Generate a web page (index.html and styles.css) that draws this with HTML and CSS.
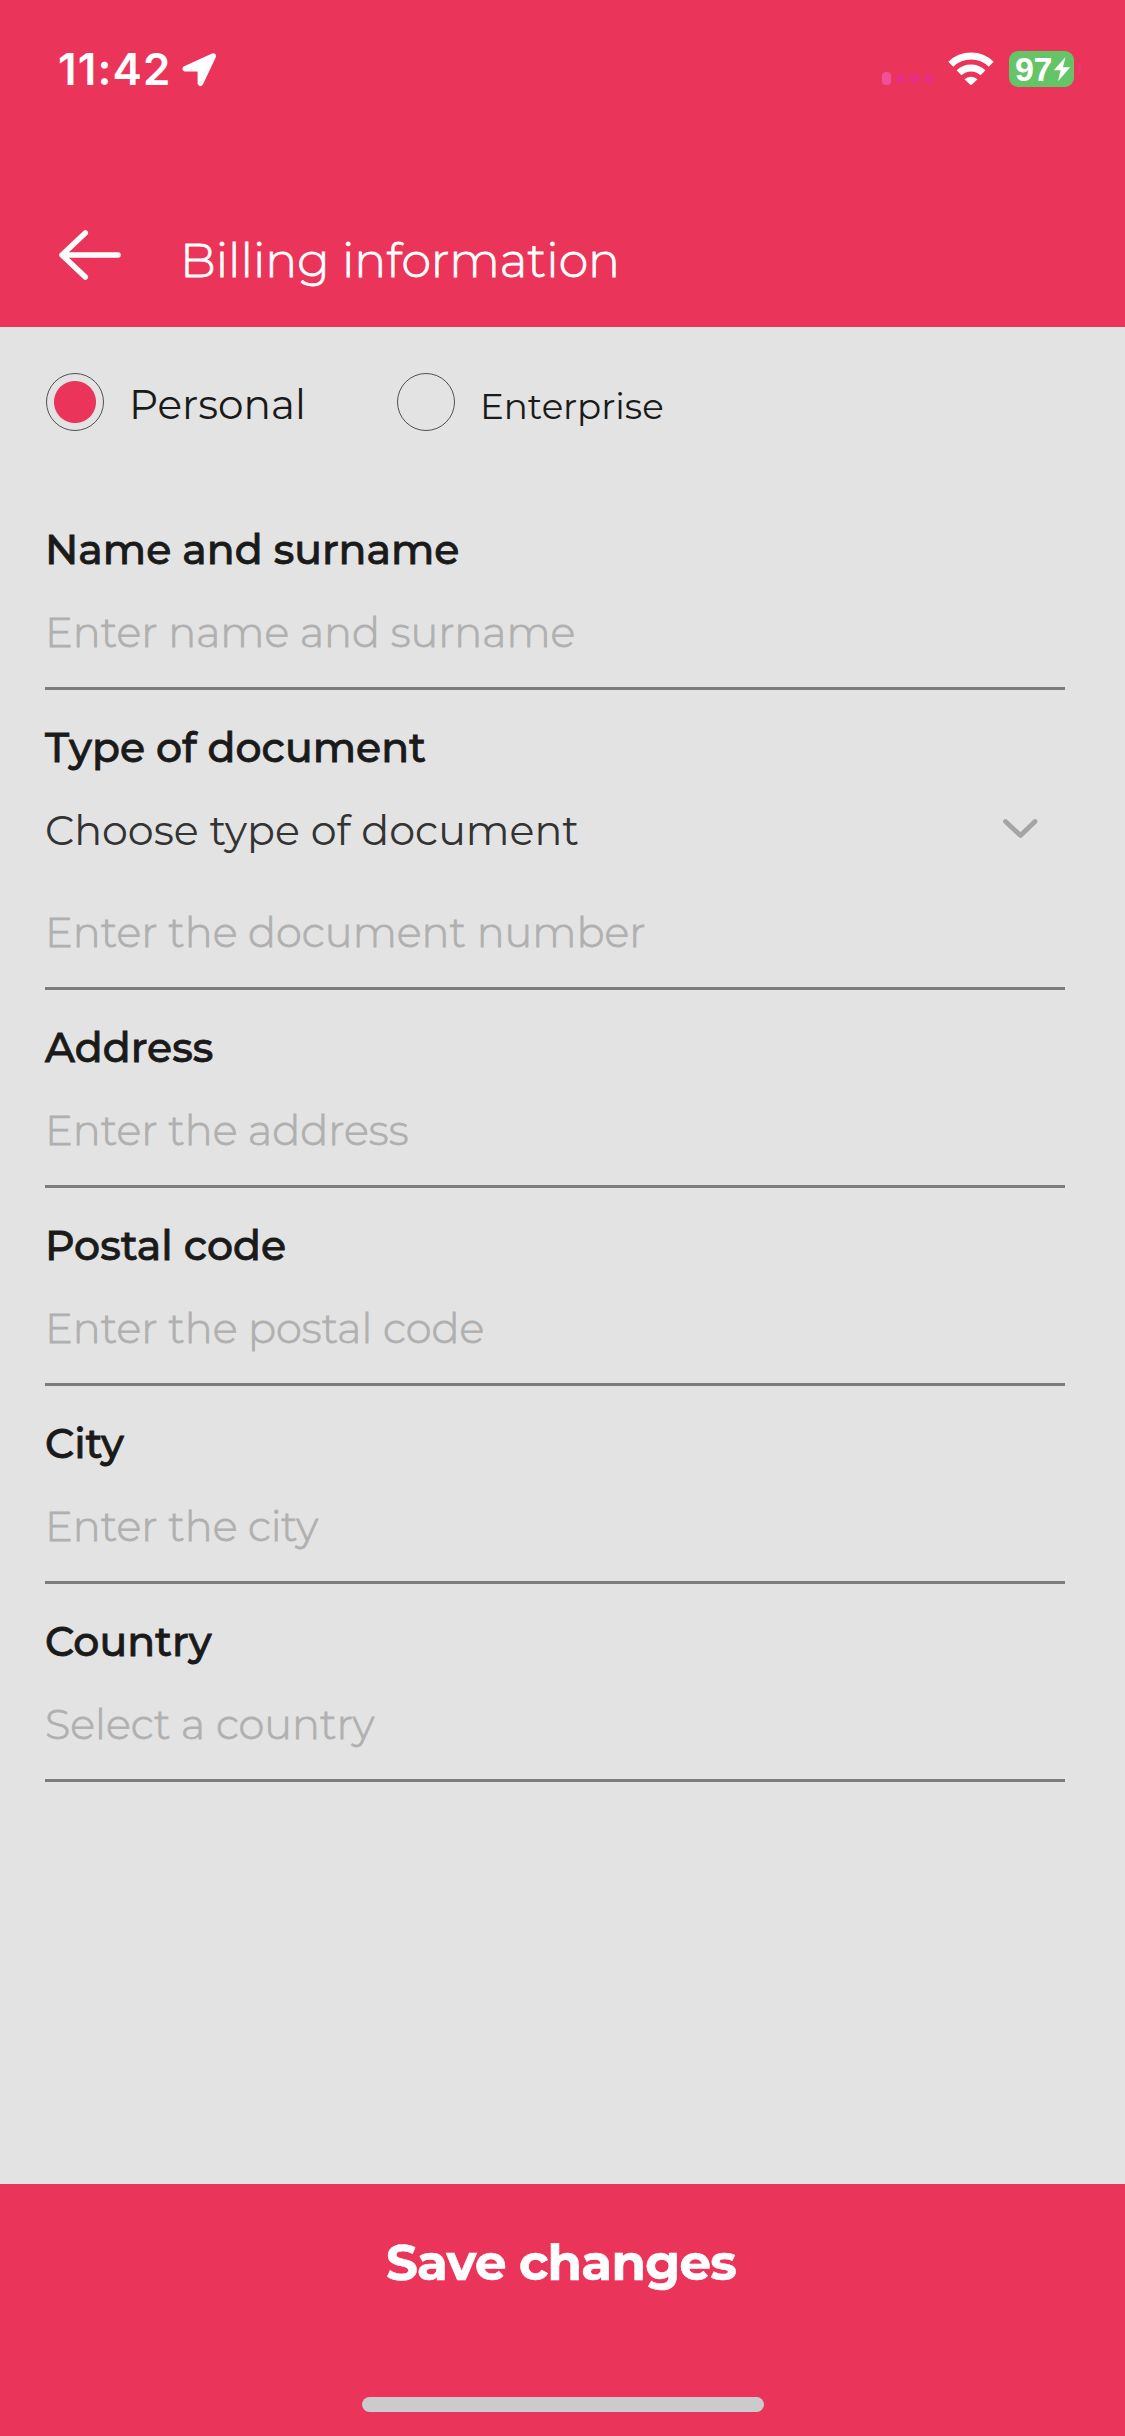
FILE: index.html
```
<!DOCTYPE html>
<html lang="en">
<head>
<meta charset="utf-8">
<title>Billing information</title>
<link rel="stylesheet" href="styles.css">
</head>
<body>
<div class="screen">
  <header class="header">
    <div class="status">
      <div class="status-left">
        <span class="time">11:42</span>
        <svg class="location" width="36" height="36" viewBox="0 0 36 36"><path d="M31.500 2.500 3 15.500q-1.500 2 .6 2.900H16.600q1 0 1 1V31.500q1.200 3 3.400 .6L34 4.500Q34 1.700 31.500 2.500Z" fill="#fff" stroke="#fff" stroke-width="2" stroke-linejoin="round"/></svg>
      </div>
      <div class="status-right">
        <div class="signal"><i class="bar bar-on"></i><i class="bar"></i><i class="bar"></i><i class="bar"></i></div>
        <svg class="wifi" width="46" height="34" viewBox="0 0 46 34"><g fill="none" stroke="#fff" stroke-width="7"><path d="M2.800 12.200A29 29 0 0 1 43.200 12.200"/><path d="M11 20.800A17.500 17.500 0 0 1 35 20.800"/></g><path d="M16.500 27.200A9.500 9.500 0 0 1 29.500 27.200L24 32.500Q23 33.300 22 32.500Z" fill="#fff"/></svg>
        <div class="battery">
          <span class="level">97</span>
          <svg class="bolt" width="18" height="26" viewBox="0 0 18 26"><path d="M12.500 1 .8 14.200H7.600L5 25.200 17.200 11.300H10Z" fill="#fff"/></svg>
        </div>
        <i class="nub"></i>
      </div>
    </div>
    <div class="nav">
      <svg class="back" width="64" height="52" viewBox="0 0 64 52"><path d="M27.300 4 4 26 27.300 48M4 26H60" fill="none" stroke="#fff" stroke-width="5.500" stroke-linecap="round" stroke-linejoin="round"/></svg>
      <h1 class="title">Billing information</h1>
    </div>
  </header>
  <main class="form">
    <div class="kinds">
      <div class="kind"><span class="radio radio-on"></span><span class="kind-name">Personal</span></div>
      <div class="kind"><span class="radio"></span><span class="kind-name kind-small">Enterprise</span></div>
    </div>
    <div class="field"><div class="label">Name and surname</div><div class="hint">Enter name and surname</div></div>
    <div class="field">
      <div class="label">Type of document</div>
      <div class="select"><span>Choose type of document</span><svg class="chevron" width="36" height="22" viewBox="0 0 36 22"><path d="M3.500 3.500 18.500 17.500 33 3.500" fill="none" stroke="#a5a5a5" stroke-width="4.800" stroke-linecap="round" stroke-linejoin="round"/></svg></div>
      <div class="hint">Enter the document number</div>
    </div>
    <div class="field"><div class="label">Address</div><div class="hint">Enter the address</div></div>
    <div class="field"><div class="label">Postal code</div><div class="hint">Enter the postal code</div></div>
    <div class="field"><div class="label">City</div><div class="hint">Enter the city</div></div>
    <div class="field"><div class="label">Country</div><div class="hint">Select a country</div></div>
  </main>
  <footer class="footer">
    <div class="save">Save changes</div>
    <div class="home"></div>
  </footer>
</div>
</body>
</html>
```
FILE: styles.css
```
body {
  margin: 0;
  font-family: Montserrat, Inter, sans-serif;
}

.screen {
  display: flex;
  flex-direction: column;
  width: 1125px;
  height: 2436px;
  overflow: hidden;
  background: #e3e3e3;
  color: #1a1a1a;
}

.header {
  box-sizing: border-box;
  height: 327px;
  background: #eb3459;
  color: #fff;
}

.status {
  display: flex;
  justify-content: space-between;
  align-items: center;
  height: 138px;
  padding: 0 44px 0 58px;
}

.status-left,
.status-right {
  display: flex;
  align-items: center;
}

.status-left {
  gap: 10px;
}

.time {
  font: 600 44px/60px Inter, sans-serif;
  letter-spacing: 1.1px;
}

.location {
  margin-top: 2px;
}

.signal {
  display: flex;
  align-items: center;
  gap: 5px;
  margin: 18px 15px 0 0;
}

.bar {
  width: 9px;
  height: 9px;
  border-radius: 3px;
  background: #e82e80;
}

.bar-on {
  height: 13px;
  border-radius: 4px;
  background: #ee5199;
}

.wifi {
  margin-right: 15px;
}

.battery {
  box-sizing: border-box;
  display: flex;
  align-items: center;
  width: 65px;
  height: 36px;
  padding-left: 6px;
  border-radius: 9px;
  background: #65c466;
}

.level {
  width: 38px;
  font: 700 34px/36px "Liberation Sans", sans-serif;
  letter-spacing: -0.5px;
}

.bolt {
  flex: none;
}

.nub {
  width: 3px;
  height: 12px;
  margin-left: 4px;
  border-radius: 0 3px 3px 0;
  background: #ea3474;
}

.nav {
  display: flex;
  align-items: flex-start;
  padding: 91px 0 0 58px;
}

.title {
  margin: 1px 0 0 58px;
  font-size: 47.5px;
  font-weight: 300;
  line-height: 60px;
  -webkit-text-stroke: 0.8px currentColor;
}

.form {
  flex: 1;
  padding: 0 60px 0 45px;
}

.kinds {
  box-sizing: border-box;
  display: flex;
  height: 165px;
  padding: 45px 0 0 1px;
}

.kind {
  display: flex;
  align-items: flex-start;
  gap: 25px;
  width: 351px;
}

.radio {
  box-sizing: border-box;
  width: 58px;
  height: 58px;
  margin-top: 1px;
  border: 1.5px solid #505050;
  border-radius: 50%;
}

.radio-on {
  background: radial-gradient(circle, #eb3459 20.5px, transparent 21.5px);
}

.kind-name {
  padding-top: 6px;
  font-size: 40.6px;
  line-height: 54px;
}

.kind-small {
  padding-top: 8px;
  font-size: 35.6px;
}

.field {
  padding: 27px 0 25px;
  border-bottom: 3px solid #7c7c7c;
  line-height: 60px;
}

.label {
  font-size: 41px;
  font-weight: 500;
  -webkit-text-stroke: 0.8px currentColor;
}

.hint {
  margin-top: 23px;
  font-size: 41.5px;
  font-weight: 300;
  color: #b0b0b0;
  -webkit-text-stroke: 0.8px currentColor;
}

.select {
  display: flex;
  justify-content: space-between;
  align-items: center;
  margin: 23px 0 42px;
  padding-right: 27px;
  font-size: 41.2px;
  color: #333;
}

.select + .hint {
  margin-top: 0;
}

.chevron {
  margin-top: -3px;
}

.footer {
  display: flex;
  flex-direction: column;
  align-items: center;
  box-sizing: border-box;
  height: 252px;
  padding-top: 49px;
  background: #eb3459;
}

.save {
  margin-right: 3px;
  font-size: 50px;
  font-weight: 700;
  line-height: 60px;
  letter-spacing: -0.8px;
  color: #fff;
  -webkit-text-stroke: 0.6px currentColor;
}

.home {
  width: 402px;
  height: 15px;
  margin: 104px 0 0 1px;
  border-radius: 8px;
  background: #cbcbcb;
}
```
